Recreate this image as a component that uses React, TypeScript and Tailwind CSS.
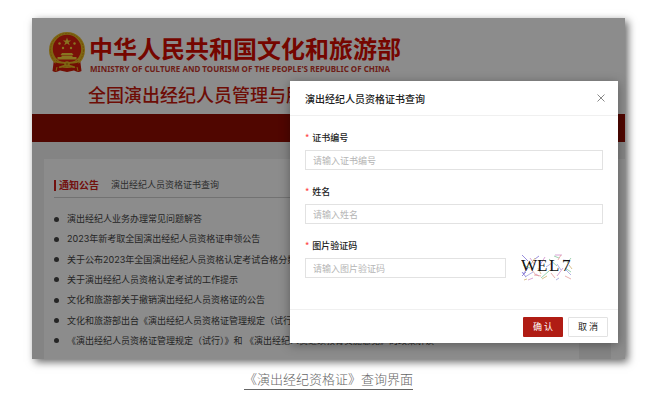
import { ReactNode } from "react";

const notices = [
  "演出经纪人业务办理常见问题解答",
  "2023年新考取全国演出经纪人员资格证申领公告",
  "关于公布2023年全国演出经纪人员资格认定考试合格分数线的公告",
  "关于演出经纪人员资格认定考试的工作提示",
  "文化和旅游部关于撤销演出经纪人员资格证的公告",
  "文化和旅游部出台《演出经纪人员资格证管理规定（试行）》",
  "《演出经纪人员资格证管理规定（试行）》和 《演出经纪人员继续教育实施意见》的政策解读",
];

const Emblem = () => (
  <svg viewBox="0 0 38 41" className="h-[41px] w-[38px]" aria-hidden="true">
    <path d="M6 27 L4.500 39 Q8 41 12 38.500 L19 40 L26 38.500 Q30 41 33.500 39 L32 27 Z" fill="#d01a08" />
    <circle cx="19" cy="18" r="18" fill="#e8b923" />
    <circle cx="19" cy="18" r="16.500" fill="none" stroke="#c99210" strokeWidth="1" strokeDasharray="2 1" />
    <circle cx="19" cy="17" r="14.200" fill="#dd2010" />
    <path
      d="M19 5.500l1.100 2.900h3.100l-2.500 1.900 1 3-2.700-1.800-2.700 1.800 1-3-2.500-1.900h3.100z"
      fill="#f7d33c"
    />
    <g fill="#f7d33c">
      <circle cx="11.500" cy="11.500" r="1.200" />
      <circle cx="26.500" cy="11.500" r="1.200" />
      <circle cx="15" cy="16" r="1.200" />
      <circle cx="23" cy="16" r="1.200" />
      <path d="M14 21h10l1.500 2h-13z" />
      <path d="M13.500 23.500h11V25h4v2.500h-19V25h4z" />
    </g>
    <path d="M8 28c4 4 7 1 11 4 4-3 7 0 11-4l1 6c-4 2-7-2-12 1-5-3-8 1-12-1z" fill="#d01a08" />
    <path d="M7 29c4 3 8 0 12 3 4-3 8 0 12-3" fill="none" stroke="#e8b923" strokeWidth="2" />
    <path d="M11 35c3 1 5-3 8-1 3-2 5 2 8 1" fill="none" stroke="#e8b923" strokeWidth="1.500" />
    <circle cx="19" cy="32" r="2.800" fill="#e8b923" />
    <circle cx="19" cy="32" r="1.200" fill="#c99210" />
    <path d="M9 35l-1 4M29 35l1 4" stroke="#e8b923" strokeWidth="1" />
  </svg>
);

const Captcha = () => (
  <svg viewBox="0 0 52 28" className="h-7 w-[52px]" role="img" aria-label="WEL7">
    <g fill="none" strokeWidth="0.8" opacity="0.85">
      <path d="M1 1l6 6M2 20l5-6M14 5l4-3M1 18l4 5M1 22l4-4" stroke="#6a5acd" />
      <path d="M9 4l5 7M24 3l-5 8M36 22l6-8M7 26l5-2M34 1h7M15 20l3 2" stroke="#c77dc4" />
      <path d="M20 24l8-7M33 2l5 2M46 9l4-5M2 11l7 3M28 5l8 7M44 14l6 4" stroke="#6fbf8b" />
      <path d="M40 1l-3 5M44 22l6 3M13 21l7 1M30 19l4 5M10 15l5 6" stroke="#e08a8a" />
      <path d="M4 23l8-5M25 13l6-4M45 16l5 5M42 6l7 1M35 26l3-2M36 10l4 6" stroke="#8f8fd8" />
      <path d="M48 11l3 4M10 10l4-6M26 22l-5 3M17 14l3 6M3 26l3-1" stroke="#c9a65a" />
    </g>
    <text
      x="0 16 28 41"
      y="17"
      fontSize="17"
      fill="#111"
      className="font-['Liberation_Serif',serif]"
    >
      WEL7
    </text>
  </svg>
);

interface FieldProps {
  id: string;
  label: string;
  placeholder: string;
  children?: ReactNode;
}

const Field = ({ id, label, placeholder, children }: FieldProps) => (
  <div>
    <label htmlFor={id} className="block text-[9px] leading-3 font-medium text-[#222]">
      <span className="mr-[3px] text-[#ff4d4f]">*</span>
      {label}
    </label>
    <div className="mt-1.5 flex h-5 items-center gap-[15px]">
      <input
        id={id}
        type="text"
        placeholder={placeholder}
        className="h-5 min-w-0 flex-1 border border-[#e2e2e2] bg-white px-[7px] text-[9px] text-[#333] outline-none placeholder:text-[#b5b5b5]"
      />
      {children}
    </div>
  </div>
);

const QueryDialog = () => (
  <form
    role="dialog"
    aria-labelledby="dialog-title"
    onSubmit={(e) => e.preventDefault()}
    className="absolute top-[63px] right-[7px] w-[328px] bg-white shadow-[0_2px_10px_rgba(0,0,0,0.35)]"
  >
    <div className="flex h-[35px] items-center justify-between border-b border-[#f0f0f0] pr-3 pl-[15px]">
      <h2 id="dialog-title" className="text-[10px] font-medium text-[#222]">
        演出经纪人员资格证书查询
      </h2>
      <button type="button" aria-label="关闭" className="p-px">
        <svg viewBox="0 0 8 8" className="size-2" stroke="#888" strokeWidth="1">
          <path d="M0.500 0.500l7 7M7.500 0.500l-7 7" />
        </svg>
      </button>
    </div>
    <div className="flex h-[193px] flex-col gap-4 px-[15px] pt-4">
      <Field id="cert-no" label="证书编号" placeholder="请输入证书编号" />
      <Field id="name" label="姓名" placeholder="请输入姓名" />
      <Field id="captcha" label="图片验证码" placeholder="请输入图片验证码">
        <div className="w-[82px] shrink-0">
          <Captcha />
        </div>
      </Field>
    </div>
    <div className="flex h-[34px] items-center justify-end gap-[5px] border-t border-[#f0f0f0] px-2.5">
      <button type="submit" className="h-5 w-10 rounded-[1px] bg-[#b01c14] text-[9px] text-white">
        确 认
      </button>
      <button
        type="button"
        className="h-5 w-10 rounded-[1px] border border-[#e2e2e2] bg-white text-[9px] text-[#222]"
      >
        取 消
      </button>
    </div>
  </form>
);

const SiteHeader = () => (
  <header>
    <div className="flex h-24 gap-0.5 bg-white pt-3.5 pl-4 whitespace-nowrap">
      <Emblem />
      <div>
        <h1 className="pl-px text-[24px] leading-8 font-bold text-[#d60c00]">
          中华人民共和国文化和旅游部
        </h1>
        <p className="pl-0.5 font-['Noto_Sans',sans-serif] text-[8px] leading-[10px] font-bold text-[#c8382c]">
          MINISTRY OF CULTURE AND TOURISM OF THE PEOPLE'S REPUBLIC OF CHINA
        </p>
        <p className="mt-1 text-[18px] leading-8 font-medium text-[#c8180c]">
          全国演出经纪人员管理与服务平台
        </p>
      </div>
    </div>
    <nav className="h-7 bg-[#930c00]" />
  </header>
);

const NoticePanel = () => (
  <section className="min-w-0 flex-1 overflow-hidden bg-white px-2.5 pt-4 pb-2">
    <div className="flex h-[23px] items-start gap-3 border-b border-[#d0d0d0]">
      <h2 className="flex items-center gap-[3px] text-[10px] leading-5 font-bold text-[#d0201a]">
        <span className="h-[11px] w-0.5 bg-[#d0201a]" />
        通知公告
      </h2>
      <span className="text-[9px] leading-5 text-[#555]">演出经纪人员资格证书查询</span>
    </div>
    <ul className="mt-[11px] flex h-[142px] flex-col justify-between font-['Inter','Noto_Sans_CJK_SC',sans-serif] text-[9px] leading-5 whitespace-nowrap text-[#444]">
      {notices.map((notice) => (
        <li key={notice} className="flex h-5 items-center gap-2">
          <span className="size-[5px] shrink-0 rounded-full bg-[#444]" />
          {notice}
        </li>
      ))}
    </ul>
  </section>
);

export default function App() {
  return (
    <figure className="bg-white pt-[18px] pr-7 pl-8 font-['Noto_Sans_CJK_SC',sans-serif]">
      <div className="relative shadow-[3px_3px_8px_rgba(0,0,0,0.6)]">
        <SiteHeader />
        <div className="flex bg-[#f0f0f0] pt-[17px] pl-3">
          <NoticePanel />
          <div className="w-8" />
          <div className="w-3.5 bg-white" />
        </div>
        <div className="absolute inset-0 bg-black/45" />
        <QueryDialog />
      </div>
      <figcaption className="mt-2.5 text-center text-[13px] leading-5 font-light text-[#666]">
        <span className="inline-block border-b border-[#666]">《演出经纪资格证》查询界面</span>
      </figcaption>
    </figure>
  );
}
